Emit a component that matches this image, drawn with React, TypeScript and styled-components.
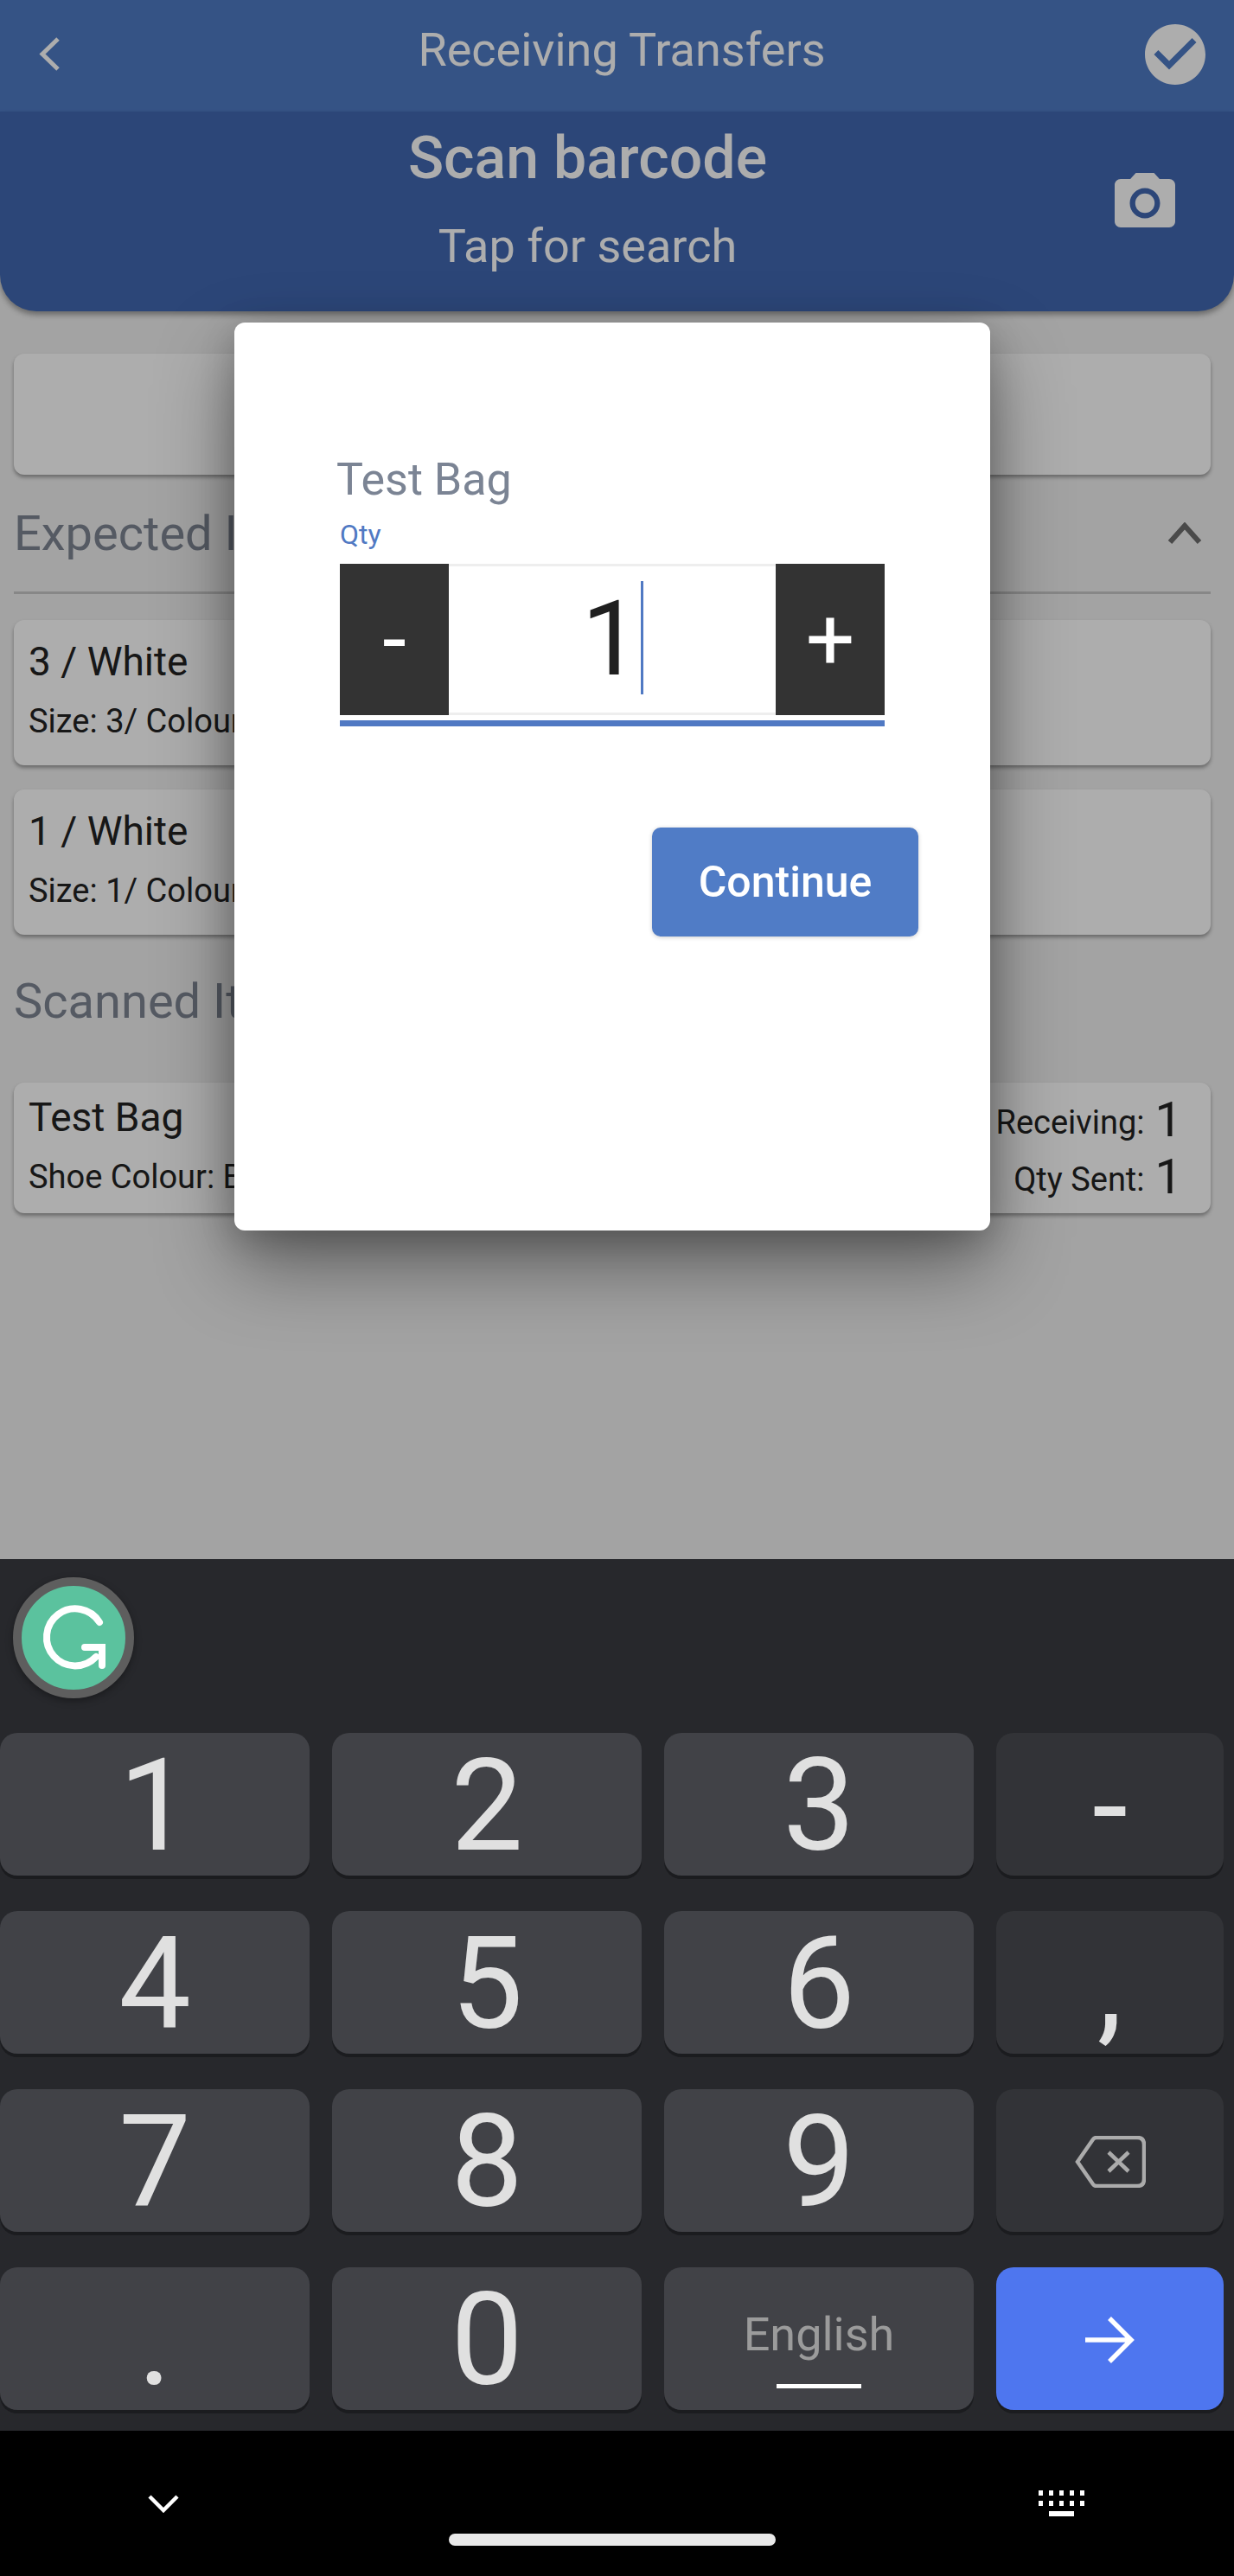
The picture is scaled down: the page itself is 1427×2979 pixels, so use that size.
import React from 'react';
import styled, {createGlobalStyle} from 'styled-components';

const GlobalStyle = createGlobalStyle`
  html, body {
    margin: 0;
    padding: 0;
    background: #000000;
  }

  * {
    box-sizing: border-box;
  }
`;

const digitRows = [
    ['1', '2', '3'],
    ['4', '5', '6'],
    ['7', '8', '9'],
];
const sideKeys = ['-', ','];

const App = () => {
    return (
        <Page>
            <GlobalStyle/>
            <Screen>
                <TopBar>
                    <BackIcon viewBox="0 0 26 41">
                        <polyline points="23,3 5,20.5 23,38" fill="none" stroke="#fff" strokeWidth="5"/>
                    </BackIcon>
                    <TopTitle>Receiving Transfers</TopTitle>
                    <CheckIcon viewBox="2 2 20 20">
                        <path fill="#fff"
                              d="M12 2C6.48 2 2 6.48 2 12s4.48 10 10 10 10-4.48 10-10S17.52 2 12 2zm-2 15l-5-5 1.41-1.41L10 14.17l7.59-7.59L19 8l-9 9z"/>
                    </CheckIcon>
                </TopBar>
                <ScanPanel>
                    <ScanText>
                        <ScanTitle>Scan barcode</ScanTitle>
                        <ScanHint>Tap for search</ScanHint>
                    </ScanText>
                    <CameraIcon viewBox="2 2 20 18">
                        <circle cx="12" cy="12" r="3.2" fill="#fff"/>
                        <path fill="#fff"
                              d="M9 2L7.17 4H4c-1.1 0-2 .9-2 2v12c0 1.1.9 2 2 2h16c1.1 0 2-.9 2-2V6c0-1.1-.9-2-2-2h-3.17L15 2H9zm3 15c-2.76 0-5-2.24-5-5s2.24-5 5-5 5 2.24 5 5-2.24 5-5 5z"/>
                    </CameraIcon>
                </ScanPanel>
                <Content>
                    <EmptyCard/>
                    <SectionHeader>
                        <SectionTitle>Expected Items</SectionTitle>
                        <CollapseIcon viewBox="0 0 40 25">
                            <polyline points="3,23 20,4 37,23" fill="none" stroke="#6d6d6d" strokeWidth="6"/>
                        </CollapseIcon>
                    </SectionHeader>
                    <Divider/>
                    <ItemCard>
                        <ItemName>3 / White</ItemName>
                        <ItemMeta>Size: 3/ Colour: White</ItemMeta>
                    </ItemCard>
                    <ItemCard>
                        <ItemName>1 / White</ItemName>
                        <ItemMeta>Size: 1/ Colour: White</ItemMeta>
                    </ItemCard>
                    <ScannedTitle>Scanned Items</ScannedTitle>
                    <ScannedCard>
                        <div>
                            <ScannedName>Test Bag</ScannedName>
                            <ItemMeta>Shoe Colour: Black</ItemMeta>
                        </div>
                        <Counts>
                            <CountRow><ItemMeta>Qty Receiving:</ItemMeta><CountValue>1</CountValue></CountRow>
                            <CountRow><ItemMeta>Qty Sent:</ItemMeta><CountValue>1</CountValue></CountRow>
                        </Counts>
                    </ScannedCard>
                </Content>
                <Scrim>
                    <Modal>
                        <ModalTitle>Test Bag</ModalTitle>
                        <QtyLabel>Qty</QtyLabel>
                        <Stepper>
                            <StepButton>-</StepButton>
                            <QtyField>
                                <QtyValue>1</QtyValue>
                                <Caret/>
                            </QtyField>
                            <StepButton>+</StepButton>
                        </Stepper>
                        <FieldLine/>
                        <ContinueButton>Continue</ContinueButton>
                    </Modal>
                </Scrim>
            </Screen>

            <Keyboard>
                <SuggestionBar>
                    <GrammarlyBadge>
                        <svg viewBox="0 0 120 120" width="120" height="120">
                            <path d="M90 42 A33 33 0 1 0 86 82" fill="none" stroke="#fff" strokeWidth="8"
                                  strokeLinecap="round"/>
                            <polyline points="73,71 93,71 93,92" fill="none" stroke="#fff" strokeWidth="8"
                                      strokeLinecap="round" strokeLinejoin="miter"/>
                        </svg>
                    </GrammarlyBadge>
                </SuggestionBar>
                <KeyGrid>
                    {digitRows.map((row, index) => (
                        <React.Fragment key={row[0]}>
                            {row.map(digit => <Key key={digit}>{digit}</Key>)}
                            {index < 2
                                ? <Key $tone="side">{sideKeys[index]}</Key>
                                : (
                                    <Key $tone="side">
                                        <svg viewBox="0 0 82 60" width="82" height="60">
                                            <path d="M3 30 L21 4 Q22.5 2 25 2 H72 Q80 2 80 10 V50 Q80 58 72 58 H25 Q22.5 58 21 56 Z"
                                                  fill="none" stroke="#ababab" strokeWidth="4.5"/>
                                            <path d="M39 19 L62 41 M62 19 L39 41" fill="none" stroke="#ababab"
                                                  strokeWidth="4.5"/>
                                        </svg>
                                    </Key>
                                )}
                        </React.Fragment>
                    ))}
                    <Key>.</Key>
                    <Key>0</Key>
                    <LanguageKey>
                        <LanguageName>English</LanguageName>
                        <LanguageBar/>
                    </LanguageKey>
                    <Key $tone="action">
                        <svg viewBox="0 0 57 56" width="57" height="56">
                            <path d="M0 28 H53 M28 3 L53 28 L28 53" fill="none" stroke="#fff" strokeWidth="5.5"/>
                        </svg>
                    </Key>
                </KeyGrid>
            </Keyboard>

            <NavBar>
                <NavIcons>
                    <svg viewBox="0 0 36 22" width="36" height="22">
                        <polyline points="2,3 18,19 34,3" fill="none" stroke="#fff" strokeWidth="4.5"/>
                    </svg>
                    <NavKeyboard>
                        {Array.from({length: 10}).map((_, i) => <NavDot key={i}/>)}
                        <NavSpace/>
                    </NavKeyboard>
                </NavIcons>
                <HomePill/>
            </NavBar>
        </Page>
    );
};

const Page = styled.div`
  width: 1427px;
  height: 2979px;
  display: flex;
  flex-direction: column;
  overflow: hidden;
  font-family: Roboto, "Liberation Sans", sans-serif;
  background: #000000;
`;

const Screen = styled.div`
  position: relative;
  height: 1803px;
  background: #f0f0f0;
  overflow: hidden;
`;

const TopBar = styled.div`
  height: 129px;
  background: #4f7bc5;
  display: grid;
  grid-template-columns: 1fr auto 1fr;
  align-items: center;
  padding: 0 33px 0 44px;
`;

const BackIcon = styled.svg`
  width: 26px;
  height: 41px;
  margin-top: -4px;
`;

const TopTitle = styled.span`
  color: #ffffff;
  font-size: 54px;
  margin-top: -14px;
`;

const CheckIcon = styled.svg`
  width: 70px;
  height: 70px;
  justify-self: end;
  margin-top: -4px;
`;

const ScanPanel = styled.div`
  height: 231px;
  background: #4168b2;
  border-radius: 0 0 42px 42px;
  box-shadow: 0 4px 6px rgba(0, 0, 0, 0.35);
  display: grid;
  grid-template-columns: 1fr 70px;
  align-items: start;
  padding: 0 68px 0 70px;
`;

const ScanText = styled.div`
  display: flex;
  flex-direction: column;
  align-items: center;
`;

const ScanTitle = styled.span`
  color: #ffffff;
  font-size: 68px;
  font-weight: 500;
  margin-top: 14px;
`;

const ScanHint = styled.span`
  color: #ffffff;
  font-size: 54px;
  margin-top: 30px;
`;

const CameraIcon = styled.svg`
  width: 70px;
  height: 63px;
  margin-top: 71px;
`;

const Content = styled.div`
  width: 1416px;
  padding: 49px 16px 0;
`;

const Card = styled.div`
  background: #ffffff;
  border-radius: 12px;
  box-shadow: 0 3px 4px rgba(0, 0, 0, 0.35);
`;

const EmptyCard = styled(Card)`
  height: 140px;
`;

const SectionHeader = styled.div`
  display: flex;
  justify-content: space-between;
  align-items: center;
  height: 135px;
  padding-right: 10px;
`;

const SectionTitle = styled.span`
  color: #7e8593;
  font-size: 56px;
`;

const CollapseIcon = styled.svg`
  width: 40px;
  height: 25px;
`;

const Divider = styled.div`
  height: 3px;
  background: #c8c8c8;
  margin-bottom: 30px;
`;

const ItemCard = styled(Card)`
  height: 168px;
  padding: 21px 17px;
  margin-bottom: 28px;
`;

const ItemName = styled.div`
  color: #222222;
  font-size: 46px;
`;

const ItemMeta = styled.div`
  color: #222222;
  font-size: 38px;
  margin-top: 20px;
`;

const ScannedTitle = styled.div`
  color: #7e8593;
  font-size: 56px;
  margin: 44px 0 61px;
`;

const ScannedCard = styled(Card)`
  height: 151px;
  padding: 10px 33px 0 17px;
  display: flex;
  justify-content: space-between;
`;

const ScannedName = styled(ItemName)`
  margin-top: 3px;
`;

const Counts = styled.div`
  display: flex;
  flex-direction: column;
`;

const CountRow = styled.div`
  display: flex;
  justify-content: flex-end;
  align-items: center;
  gap: 12px;
  height: 66px;

  ${ItemMeta} {
    margin-top: 6px;
  }
`;

const CountValue = styled.span`
  color: #222222;
  font-size: 56px;
`;

const Scrim = styled.div`
  position: absolute;
  inset: 0;
  background: rgba(0, 0, 0, 0.32);
  display: flex;
  align-items: flex-start;
  padding: 373px 0 0 271px;
`;

const Modal = styled.div`
  width: 874px;
  height: 1050px;
  background: #ffffff;
  border-radius: 12px;
  box-shadow: 0 40px 90px rgba(0, 0, 0, 0.42), 0 10px 40px rgba(0, 0, 0, 0.2);
  display: flex;
  flex-direction: column;
  padding: 152px 122px 0;
`;

const ModalTitle = styled.div`
  color: #7b8494;
  font-size: 52px;
  margin-left: -4px;
  line-height: 60px;
`;

const QtyLabel = styled.div`
  color: #5079c3;
  font-size: 32px;
  line-height: 38px;
  margin-top: 14px;
`;

const Stepper = styled.div`
  display: flex;
  height: 175px;
  margin-top: 15px;
`;

const StepButton = styled.div`
  width: 126px;
  background: #333333;
  color: #ffffff;
  font-size: 100px;
  display: flex;
  align-items: center;
  justify-content: center;
`;

const QtyField = styled.div`
  flex: 1;
  border-top: 3px solid #eeeeee;
  border-bottom: 3px solid #eeeeee;
  display: flex;
  align-items: center;
  justify-content: center;
`;

const QtyValue = styled.span`
  color: #1f1f1f;
  font-size: 121px;
  line-height: 1;
`;

const Caret = styled.span`
  width: 3px;
  height: 131px;
  background: #5079c3;
  margin-top: -5px;
`;

const FieldLine = styled.div`
  height: 7px;
  background: #5079c3;
  margin-top: 6px;
`;

const ContinueButton = styled.div`
  align-self: flex-end;
  width: 308px;
  height: 126px;
  margin: 117px -39px 0 0;
  background: #507cc6;
  border-radius: 10px;
  box-shadow: 0 1px 5px rgba(0, 0, 0, 0.2);
  color: #ffffff;
  font-size: 50px;
  font-weight: 500;
  display: flex;
  align-items: center;
  justify-content: center;
`;

const Keyboard = styled.div`
  height: 1008px;
  background: #27282c;
`;

const SuggestionBar = styled.div`
  height: 201px;
  padding: 21px 0 0 15px;
`;

const GrammarlyBadge = styled.div`
  width: 140px;
  height: 140px;
  border: 10px solid #5e5e5e;
  border-radius: 50%;
  background: #5bc29e;
  box-shadow: 0 3px 8px rgba(0, 0, 0, 0.35);
`;

const KeyGrid = styled.div`
  display: grid;
  grid-template-columns: 358px 358px 358px 263px;
  grid-auto-rows: 165px;
  column-gap: 26px;
  row-gap: 41px;
`;

const keyTones = {
    digit: '#414247',
    side: '#323337',
    action: '#4e76ef',
};

const Key = styled.div<{ $tone?: keyof typeof keyTones }>`
  background: ${({$tone}) => keyTones[$tone || 'digit']};
  border-radius: 20px;
  box-shadow: 0 4px 0 #1b1c1f;
  color: #e0e0e0;
  font-size: 149px;
  line-height: 165px;
  padding-top: 3px;
  display: flex;
  align-items: center;
  justify-content: center;
`;

const LanguageKey = styled(Key)`
  flex-direction: column;
  padding-top: 0;
`;

const LanguageName = styled.span`
  color: #9b9b9b;
  font-size: 54px;
  line-height: 60px;
  margin-top: 23px;
`;

const LanguageBar = styled.span`
  width: 98px;
  height: 5px;
  background: #ffffff;
  margin-top: 27px;
`;

const NavBar = styled.div`
  flex: 1;
  background: #000000;
  display: flex;
  flex-direction: column;
  align-items: center;
  padding-top: 69px;
`;

const NavIcons = styled.div`
  width: 100%;
  height: 30px;
  display: flex;
  justify-content: space-between;
  align-items: center;
  padding: 0 173px 0 171px;
`;

const NavKeyboard = styled.div`
  width: 53px;
  display: grid;
  grid-template-columns: repeat(5, 5px);
  grid-auto-rows: 6px;
  column-gap: 7px;
  row-gap: 6px;
  justify-content: space-between;
`;

const NavDot = styled.span`
  background: #ffffff;
`;

const NavSpace = styled.span`
  grid-column: 2 / span 3;
  background: #ffffff;
`;

const HomePill = styled.div`
  width: 378px;
  height: 14px;
  border-radius: 7px;
  background: #e8e8e8;
  margin: 20px 11px 0 0;
`;

export default App;
